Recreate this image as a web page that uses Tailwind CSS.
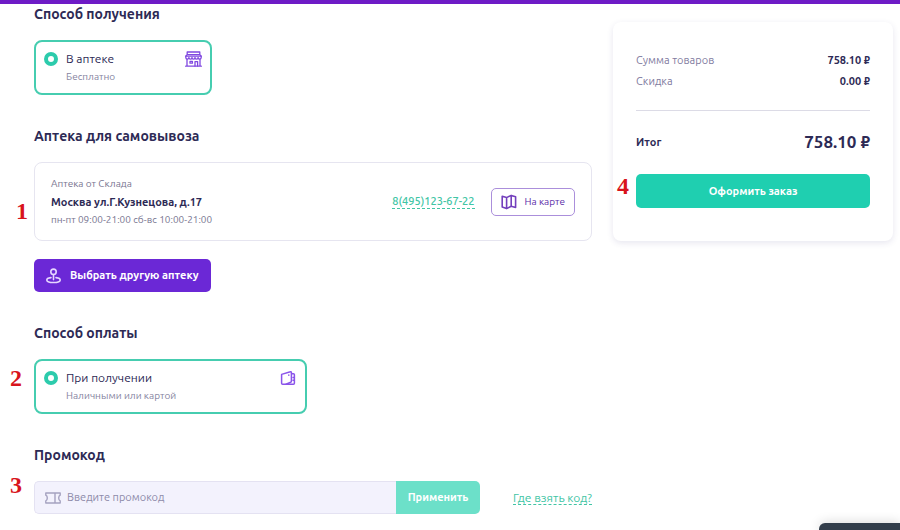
<!DOCTYPE html>
<html lang="ru">
<head>
    <meta charset="UTF-8">
    <meta name="viewport" content="width=device-width, initial-scale=1.0">
    <title>Оформление заказа</title>

    <script src="https://cdn.jsdelivr.net/npm/@tailwindcss/browser@4"></script>
</head>
<body class="bg-white font-['Ubuntu','Noto_Sans',sans-serif] text-[#2d2a55] border-t-4 border-[#6e1bc6] min-h-screen">

    <main class="flex items-start gap-[21px] pl-[34px] pr-[7px]">

        <div class="flex-1 flex flex-col gap-[31px]">

            <!-- Delivery method -->
            <section>
                <h2 class="text-sm leading-5 font-semibold mb-4">Способ получения</h2>
                <label class="flex items-start w-[178px] h-[55px] px-2 pt-[9px] border-2 border-[#46cdb0] rounded-lg">
                    <input type="radio" name="delivery" checked class="appearance-none shrink-0 size-[14px] mt-px rounded-full border-4 border-[#2ccbac] bg-white">
                    <span class="flex-1 ml-2">
                        <span class="block text-xs leading-4">В аптеке</span>
                        <span class="block text-[10px] leading-5 text-[#8583a0]">Бесплатно</span>
                    </span>
                    <!-- Shop icon -->
                    <svg class="w-[17px] h-4" viewBox="0 0 17 16" fill="none" stroke="#8048e0" stroke-width="1.3" stroke-linejoin="round" stroke-linecap="round">
                        <path d="M2.2 1h12.6v2.6H2.2zM2.2 3.6L.8 5.2v1.2c0 2.2 3.1 2.2 3.1 0 0 2.2 3.1 2.2 3.1 0 0 2.2 3 2.2 3 0 0 2.2 3.1 2.2 3.1 0 0 2.2 3.1 2.2 3.1 0V5.2l-1.4-1.6"/>
                        <path d="M.8 5.2h15.4M2 8.2V15M15 8.2V15M.6 15.2h15.8"/>
                        <path d="M5 10.4h2.4v1.8H5zM10 15v-4.400h2.600V15"/>
                    </svg>
                </label>
            </section>

            <!-- Pickup pharmacy -->
            <section class="relative">
                <span class="absolute -left-[18px] top-[73px] font-['Liberation_Serif',serif] font-bold text-2xl leading-6 text-[#d8141c]">1</span>
                <h2 class="text-sm leading-5 font-semibold mb-4">Аптека для самовывоза</h2>
                <div class="flex items-center h-[79px] px-4 border border-[#e6e5f0] rounded-lg">
                    <div class="flex-1">
                        <p class="text-[10px] leading-[18px] text-[#77748f]">Аптека от Склада</p>
                        <p class="text-[11px] leading-[18px] font-bold">Москва ул.Г.Кузнецова, д.17</p>
                        <p class="text-[10px] leading-[18px] text-[#77748f]">пн-пт 09:00-21:00 сб-вс 10:00-21:00</p>
                    </div>
                    <a href="tel:84951236722" class="text-[11px] leading-[13px] font-medium text-[#41c5a5] border-b border-dashed border-[#41c5a5]">8(495)123-67-22</a>
                    <button type="button" class="flex items-center gap-2 h-7 ml-4 px-[9px] border border-[#ab8fdb] rounded-[5px] text-[10px] text-[#5b2ba8]">
                        <!-- Folded map icon -->
                        <svg class="size-4" viewBox="0 0 16 16" fill="none" stroke="#7440bd" stroke-width="1.6" stroke-linejoin="round">
                            <path d="M1.2 2.2l4.400 1.400 4.600-2.200 4.400 1.400v10.600l-4.400-1.200-4.600 2.400-4.400-1.600zM5.600 3.600v11M10.200 1.400v10.800"/>
                        </svg>
                        На карте
                    </button>
                </div>
                <button type="button" class="flex items-center gap-[9px] h-[33px] mt-[18px] px-3 bg-[#6b28d6] rounded-[5px] text-[11px] font-semibold text-white">
                    <!-- Location pin icon -->
                    <svg class="w-[15px] h-4" viewBox="0 0 15 16" fill="none" stroke="#e6d6ff" stroke-width="1.6" stroke-linecap="round">
                        <circle cx="7.5" cy="3.8" r="2.7"/>
                        <path d="M7.5 6.6v5M5 9.6c-2.4.3-4.2 1.1-4.2 2.300 0 1.500 3 2.600 6.700 2.600s6.700-1.100 6.700-2.600c0-1.200-1.800-2-4.200-2.300"/>
                    </svg>
                    Выбрать другую аптеку
                </button>
            </section>

            <!-- Payment method -->
            <section class="relative">
                <span class="absolute -left-6 top-[43px] font-['Liberation_Serif',serif] font-bold text-2xl leading-6 text-[#d8141c]">2</span>
                <h2 class="text-sm leading-5 font-semibold mb-4">Способ оплаты</h2>
                <label class="flex items-start w-[273px] h-[55px] px-2 pt-[9px] border-2 border-[#46cdb0] rounded-lg">
                    <input type="radio" name="payment" checked class="appearance-none shrink-0 size-[14px] mt-px rounded-full border-4 border-[#2ccbac] bg-white">
                    <span class="flex-1 ml-2">
                        <span class="block text-xs leading-4">При получении</span>
                        <span class="block text-[10px] leading-5 text-[#8583a0]">Наличными или картой</span>
                    </span>
                    <!-- Wallet icon -->
                    <svg class="w-[17px] h-4" viewBox="0 0 17 16" fill="none" stroke="#8a54ea" stroke-width="1.5" stroke-linejoin="round" stroke-linecap="round">
                        <path d="M1.600 4.400L10.400 1.800c.6-.2 1 .1 1 .7v8.700c0 .5-.2.800-.7 1L6 14.200H2.600c-.6 0-1-.4-1-1z"/>
                        <path d="M11.600 3.800h1.800c.6 0 1 .4 1 1v8.400c0 .6-.4 1-1 1H6M14.200 7.600h-1.200M14.200 10.200h-1.200M8.800 5v.2"/>
                    </svg>
                </label>
            </section>

            <!-- Promo code -->
            <section class="relative">
                <span class="absolute -left-6 top-7 font-['Liberation_Serif',serif] font-bold text-2xl leading-6 text-[#d8141c]">3</span>
                <h2 class="text-sm leading-5 font-semibold mb-4">Промокод</h2>
                <form class="flex items-center">
                    <div class="flex-1 flex h-[33px]">
                        <label for="promo" class="flex items-center pl-[10px] pr-1.5 bg-[#f3f2fd] border border-r-0 border-[#e4e2f2] rounded-l-[5px]" aria-label="Промокод">
                            <!-- Ticket icon -->
                            <svg class="w-4 h-3" viewBox="0 0 16 12" fill="none" stroke="#a5a2c0" stroke-width="1.4" stroke-linejoin="round">
                                <path d="M.8 1h14.4v2.200c-2 .8-2 4.800 0 5.600V11H.8V8.800c2-.8 2-4.800 0-5.600zM10 1v10"/>
                            </svg>
                        </label>
                        <input id="promo" type="text" placeholder="Введите промокод" class="flex-1 min-w-0 bg-[#f3f2fd] border-y border-[#e4e2f2] text-[11px] placeholder:text-[#8e8baa] outline-none">
                        <button type="submit" class="w-[84px] bg-[#6ce0c9] rounded-r-[5px] text-[11px] font-semibold text-white">Применить</button>
                    </div>
                    <a href="#" class="ml-[33px] text-xs leading-[13px] text-[#41c5a5] border-b border-dashed border-[#41c5a5]">Где взять код?</a>
                </form>
            </section>

        </div>

        <!-- Order summary -->
        <aside class="relative w-[280px] mt-[18px] px-[23px] pt-7 pb-[33px] rounded-lg shadow-[0_2px_6px_rgba(60,50,120,0.12)]">
            <span class="absolute left-1 top-[152px] font-['Liberation_Serif',serif] font-bold text-2xl leading-6 text-[#d8141c]">4</span>
            <dl class="text-[11px] leading-[21px]">
                <div class="flex justify-between">
                    <dt class="text-[#7f7ba0]">Сумма товаров</dt>
                    <dd class="font-bold">758.10 ₽</dd>
                </div>
                <div class="flex justify-between">
                    <dt class="text-[#7f7ba0]">Скидка</dt>
                    <dd class="font-bold">0.00 ₽</dd>
                </div>
                <div class="flex items-center justify-between mt-[18px] pt-[19px] border-t border-[#dcdbe6]">
                    <dt class="font-semibold">Итог</dt>
                    <dd class="text-[17px] leading-6 font-semibold">758.10 ₽</dd>
                </div>
            </dl>
            <button type="button" class="w-full h-[34px] mt-5 bg-[#1fcfb0] rounded-[5px] text-[11px] font-semibold text-white">Оформить заказ</button>
        </aside>

    </main>

    <!-- Chat widget -->
    <div class="fixed bottom-0 right-0 w-[81px] h-[7px] bg-[#333e4b] rounded-tl-md shadow-[0_0_12px_rgba(0,0,0,0.2)]"></div>

</body>
</html>
